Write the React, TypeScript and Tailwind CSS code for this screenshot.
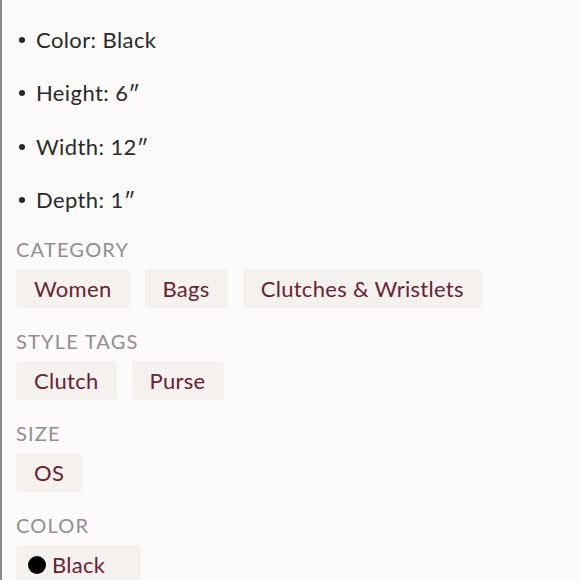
import React from "react";

const specs = ["Color: Black", "Height: 6\u2033", "Width: 12\u2033", "Depth: 1\u2033"];

function Chip({ children, wide }: { children: React.ReactNode; wide?: boolean }) {
  return (
    <span
      className={`flex h-[39px] items-center rounded-[4px] bg-[#f4f1ef] text-[22px] tracking-[0.3px] text-[#6b2234] ${
        wide ? "pl-[12px] pr-[36px]" : "px-[18px]"
      }`}
    >
      {children}
    </span>
  );
}

function Group({ title, items, wide }: { title: string; items: React.ReactNode[]; wide?: boolean }) {
  return (
    <div className="flex flex-col">
      <div className="h-[28px] text-[20px] leading-[18px] tracking-[1.2px] text-[#8f8f8f] uppercase">{title}</div>
      <div className="mt-[1px] flex gap-[15px]">
        {items.map((it, i) => (
          <Chip key={i} wide={wide}>
            {it}
          </Chip>
        ))}
      </div>
    </div>
  );
}

export default function App() {
  return (
    <div className="h-[580px] w-[580px] overflow-hidden border-l-2 border-[#8a8a8a] bg-[#fcfafa] pl-[14px] font-['Lato',sans-serif]">
      <ul className="flex flex-col pt-[26px]">
        {specs.map((s) => (
          <li key={s} className="flex h-[53.3px] items-start text-[22px] leading-[28px] tracking-[0.4px] text-[#2a2a2a]">
            <span className="mt-[11px] ml-[3px] mr-[11px] h-[6px] w-[6px] shrink-0 rounded-full bg-[#2a2a2a]" />
            {s}
          </li>
        ))}
      </ul>
      <div className="mt-[1px] flex flex-col gap-[24px]">
        <Group title="Category" items={["Women", "Bags", "Clutches & Wristlets"]} />
        <Group title="Style Tags" items={["Clutch", "Purse"]} />
        <Group title="Size" items={["OS"]} />
        <Group
          title="Color"
          wide
          items={[
            <span className="flex items-center gap-[6px]">
              <span className="h-[18px] w-[18px] rounded-full bg-black" />
              Black
            </span>,
          ]}
        />
      </div>
    </div>
  );
}
